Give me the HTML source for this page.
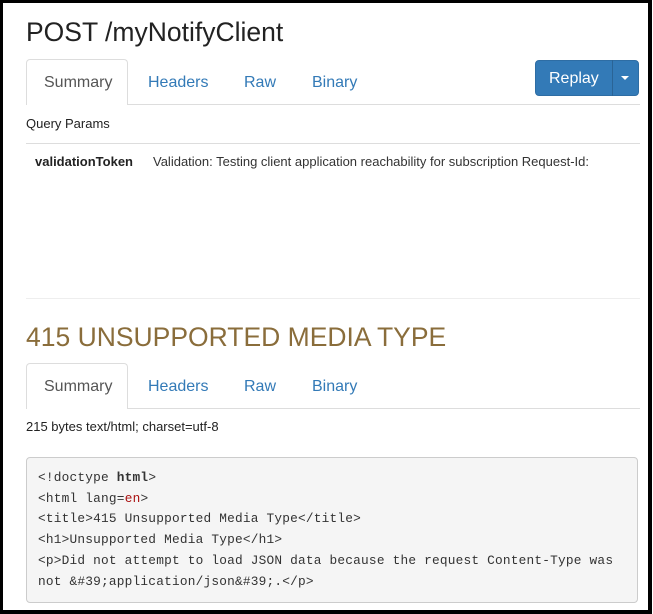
<!DOCTYPE html>
<html><head><meta charset="utf-8"><style>
*{margin:0;padding:0;box-sizing:border-box}
body{width:653px;height:614px;background:#fff;font-family:"Liberation Sans",Arial,sans-serif;position:relative;overflow:hidden}
.frame{position:absolute;left:0;top:0;width:652px;height:614px;border:3px solid #000;border-right-width:4px;border-bottom-width:4px}
.a{position:absolute;white-space:nowrap}
.h1{font-size:26.5px;color:#222;left:26px}
.tab{font-size:16px;color:#337ab7}
.act{position:absolute;left:26px;width:102px;height:46px;border:1px solid #ddd;border-bottom:none;border-radius:4px 4px 0 0;background:#fff}
.line{position:absolute;left:26px;width:614px;height:1px;background:#ddd}
.sm{font-size:13px;color:#222}
pre{position:absolute;left:26px;top:457px;width:612px;height:146px;background:#f5f5f5;border:1px solid #ccc;border-radius:4px;font-family:"Liberation Mono","DejaVu Sans Mono",monospace;font-size:12.8px;letter-spacing:0.2px;line-height:20.7px;color:#333;padding:10px 0 0 11px}
</style></head><body>
<div class="a h1" style="top:17px">POST /myNotifyClient</div>
<div class="line" style="top:104px"></div>
<div class="act" style="top:59px"></div>
<div class="a tab" style="left:44px;top:74px;color:#555">Summary</div>
<div class="a tab" style="left:148px;top:74px">Headers</div>
<div class="a tab" style="left:244px;top:74px">Raw</div>
<div class="a tab" style="left:312px;top:74px">Binary</div>
<div class="a" style="left:535px;top:60px;width:104px;height:36px;background:#337ab7;border:1px solid #2e6da4;border-radius:4px"></div>
<div class="a" style="left:612px;top:60px;width:1px;height:36px;background:#2a6496"></div>
<div class="a" style="left:549px;top:70px;font-size:16px;color:#fff">Replay</div>
<div class="a" style="left:621px;top:76px;width:0;height:0;border-left:4px solid transparent;border-right:4px solid transparent;border-top:4px solid #fff"></div>
<div class="a sm" style="left:26px;top:116px">Query Params</div>
<div class="line" style="top:143px"></div>
<div class="a sm" style="left:35px;top:154px;font-weight:bold">validationToken</div>
<div class="a sm" style="left:153px;top:154px;color:#333">Validation: Testing client application reachability for subscription Request-Id:</div>
<div class="line" style="top:298px;background:#eee"></div>
<div class="a h1" style="top:322px;color:#8a6d3b">415 UNSUPPORTED MEDIA TYPE</div>
<div class="line" style="top:408px"></div>
<div class="act" style="top:363px"></div>
<div class="a tab" style="left:44px;top:378px;color:#555">Summary</div>
<div class="a tab" style="left:148px;top:378px">Headers</div>
<div class="a tab" style="left:244px;top:378px">Raw</div>
<div class="a tab" style="left:312px;top:378px">Binary</div>
<div class="a sm" style="left:26px;top:419px">215 bytes text/html; charset=utf-8</div>
<pre>&lt;!doctype <b>html</b>&gt;
&lt;html lang=<span style="color:#a11">en</span>&gt;
&lt;title&gt;415 Unsupported Media Type&lt;/title&gt;
&lt;h1&gt;Unsupported Media Type&lt;/h1&gt;
&lt;p&gt;Did not attempt to load JSON data because the request Content-Type was
not &amp;#39;application/json&amp;#39;.&lt;/p&gt;</pre>
<div class="frame"></div>
</body></html>
